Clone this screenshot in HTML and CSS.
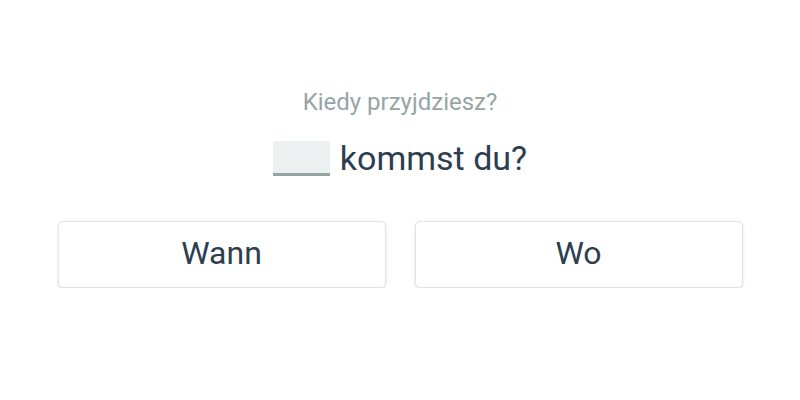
FILE: index.html
```html
<!DOCTYPE html>
<html lang="de">
<head>
<meta charset="utf-8">
<title>Quiz</title>
<link rel="stylesheet" href="styles.css">
</head>
<body>
<main class="quiz">
  <p class="prompt">Kiedy przyjdziesz?</p>
  <p class="sentence"><span class="blank"></span> kommst du?</p>
  <div class="options">
    <button class="option">Wann</button>
    <button class="option">Wo</button>
  </div>
</main>
</body>
</html>
```
FILE: styles.css
```css
html, body {
  margin: 0;
  padding: 0;
  background: #ffffff;
}
body {
  font-family: Roboto, "Liberation Sans", sans-serif;
  color: #2c3e50;
}
.quiz {
  width: 685px;
  margin: 0 auto;
  padding-top: 86px;
  display: flex;
  flex-direction: column;
  align-items: center;
}
.prompt {
  margin: 0;
  font-size: 24px;
  line-height: 32px;
  color: #95a5a6;
}
.sentence {
  margin: 20px 0 0;
  font-size: 34px;
  line-height: 40px;
  display: flex;
  align-items: center;
  gap: 10px;
}
.blank {
  display: inline-block;
  width: 57px;
  height: 32px;
  background: #ecf0f1;
  border-bottom: 3px solid #95a5a6;
}
.options {
  margin-top: 43px;
  width: 100%;
  display: grid;
  grid-template-columns: 1fr 1fr;
  gap: 29px;
}
.option {
  height: 67px;
  background: #ffffff;
  border: 1px solid #e0e4e7;
  border-radius: 5px;
  box-shadow: 0 1px 3px rgba(0, 0, 0, 0.12);
  font-family: Roboto, "Liberation Sans", sans-serif;
  font-size: 32px;
  color: #2c3e50;
  padding: 0 0 4px;
}
```
